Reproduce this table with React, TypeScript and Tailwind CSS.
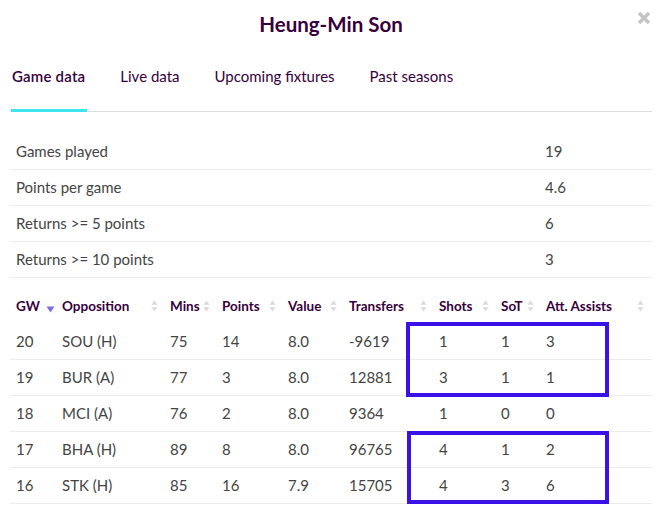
import React from "react";

type Game = {
  gw: number;
  opp: string;
  mins: number;
  pts: number;
  value: string;
  transfers: number;
  shots: number;
  sot: number;
  att: number;
};

const stats = [
  { label: "Games played", value: "19" },
  { label: "Points per game", value: "4.6" },
  { label: "Returns >= 5 points", value: "6" },
  { label: "Returns >= 10 points", value: "3" },
];

const games: Game[] = [
  { gw: 20, opp: "SOU (H)", mins: 75, pts: 14, value: "8.0", transfers: -9619, shots: 1, sot: 1, att: 3 },
  { gw: 19, opp: "BUR (A)", mins: 77, pts: 3, value: "8.0", transfers: 12881, shots: 3, sot: 1, att: 1 },
  { gw: 18, opp: "MCI (A)", mins: 76, pts: 2, value: "8.0", transfers: 9364, shots: 1, sot: 0, att: 0 },
  { gw: 17, opp: "BHA (H)", mins: 89, pts: 8, value: "8.0", transfers: 96765, shots: 4, sot: 1, att: 2 },
  { gw: 16, opp: "STK (H)", mins: 85, pts: 16, value: "7.9", transfers: 15705, shots: 4, sot: 3, att: 6 },
];

const cols = "grid grid-cols-[46px_108px_52px_66px_61px_90px_62px_45px_110px]";

function SortIcon() {
  return (
    <svg width="7" height="12" viewBox="0 0 7 12" className="shrink-0">
      <path d="M3.5 0.5 L6.5 4.8 H0.5 Z" fill="#dadada" />
      <path d="M3.5 11.5 L6.5 7.2 H0.5 Z" fill="#dadada" />
    </svg>
  );
}

function HeadCell({ label, sorted }: { label: string; sorted?: boolean }) {
  if (sorted) {
    return (
      <div className="flex items-center pl-[6px] gap-[6px]">
        <span>{label}</span>
        <svg width="9" height="7" viewBox="0 0 9 7" className="mt-[7px]">
          <path d="M0.5 0.5 H8.5 L4.5 6.5 Z" fill="#7b6fe0" />
        </svg>
      </div>
    );
  }
  return (
    <div className="flex items-center justify-between pl-[6px] pr-[6px]">
      <span>{label}</span>
      <SortIcon />
    </div>
  );
}

export default function App() {
  const tabs = ["Game data", "Live data", "Upcoming fixtures", "Past seasons"];

  return (
    <div
      className="w-[662px] h-[512px] bg-white overflow-hidden relative text-[15px] text-[#444444]"
      style={{ fontFamily: "Lato, 'Noto Sans', sans-serif" }}
    >
      {/* Title */}
      <div className="h-[48px] flex items-center justify-center">
        <h1 className="text-[20.5px] font-bold text-[#37003c] mt-[1px]">Heung-Min Son</h1>
      </div>
      <button className="absolute right-[10px] top-[10px] w-[16px] h-[16px] flex items-center justify-center">
        <svg width="14" height="14" viewBox="0 0 14 14">
          <path d="M2 2 L12 12 M12 2 L2 12" stroke="#c4c4c4" strokeWidth="3.5" strokeLinecap="butt" />
        </svg>
      </button>

      {/* Tabs */}
      <div className="mx-[10px] mt-[11px] flex gap-[35px] border-b border-[#dcdcdc] px-[2px]">
        {tabs.map((t, i) => (
          <div key={t} className="relative pb-[23px] pt-[6px]">
            <span className={i === 0 ? "font-semibold text-[#37003c] tracking-[0.2px]" : "text-[#37003c]"}>{t}</span>
            {i === 0 && (
              <div className="absolute left-[-1px] right-[-2px] bottom-[-1px] h-[3px] bg-[#3de6ec]" />
            )}
          </div>
        ))}
      </div>

      {/* Summary */}
      <div className="mx-[10px] mt-[22px]">
        {stats.map((s) => (
          <div key={s.label} className="h-[36px] flex items-center border-b border-[#ececec]">
            <span className="pl-[6px] w-[535px]">{s.label}</span>
            <span>{s.value}</span>
          </div>
        ))}
      </div>

      {/* Game table */}
      <div className="mx-[10px] mt-[11px] relative">
        <div className={`${cols} h-[35px] items-center font-bold text-[13.5px] text-[#37003c]`}>
          <HeadCell label="GW" sorted />
          <HeadCell label="Opposition" />
          <HeadCell label="Mins" />
          <HeadCell label="Points" />
          <HeadCell label="Value" />
          <HeadCell label="Transfers" />
          <HeadCell label="Shots" />
          <HeadCell label="SoT" />
          <HeadCell label="Att. Assists" />
        </div>
        {games.map((g) => (
          <div key={g.gw} className={`${cols} h-[36px] items-center border-b border-[#ececec]`}>
            <span className="pl-[6px]">{g.gw}</span>
            <span className="pl-[6px]">{g.opp}</span>
            <span className="pl-[6px]">{g.mins}</span>
            <span className="pl-[6px]">{g.pts}</span>
            <span className="pl-[6px]">{g.value}</span>
            <span className="pl-[6px]">{g.transfers}</span>
            <span className="pl-[6px]">{g.shots}</span>
            <span className="pl-[6px]">{g.sot}</span>
            <span className="pl-[6px]">{g.att}</span>
          </div>
        ))}

        {/* Highlight boxes */}
        <div className="absolute left-[396px] top-[33px] w-[203px] h-[75px] border-[4px] border-[#3a12e8]" />
        <div className="absolute left-[397px] top-[142px] w-[202px] h-[73px] border-[4px] border-[#3a12e8]" />
      </div>
    </div>
  );
}
